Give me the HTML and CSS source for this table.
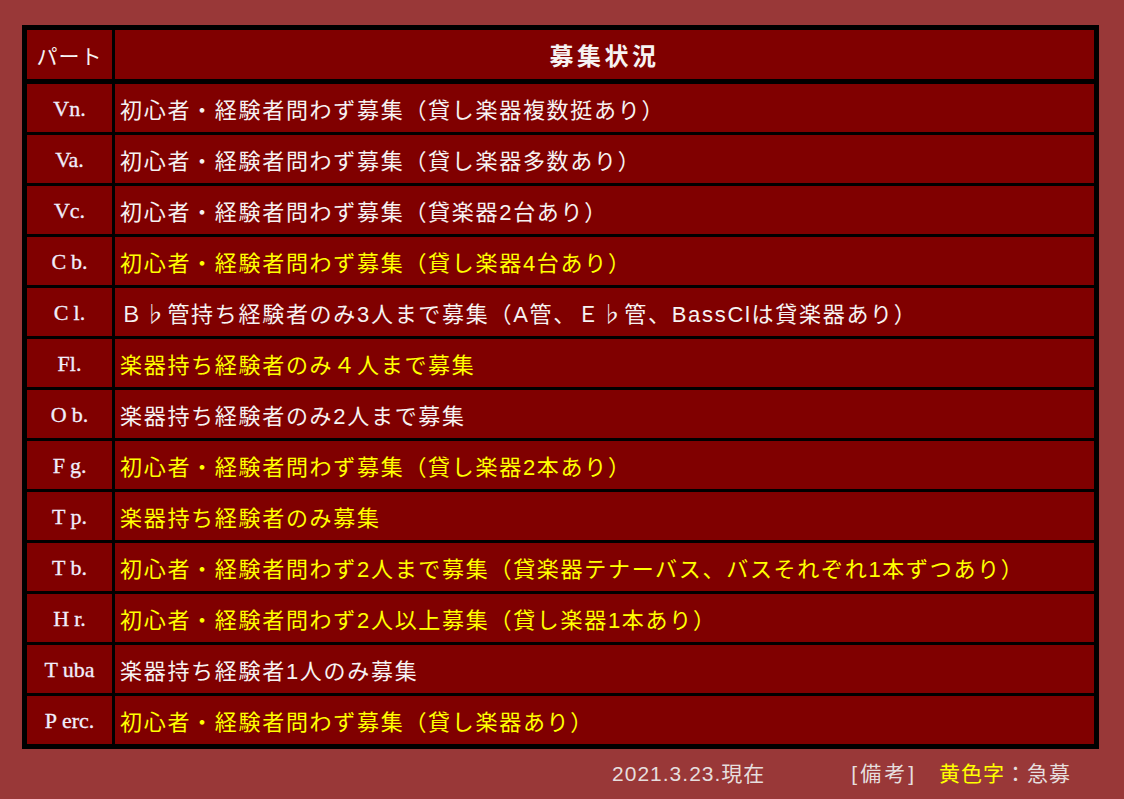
FILE: index.html
```html
<!DOCTYPE html>
<html lang="ja">
<head>
<meta charset="utf-8">
<title>募集状況</title>
<link rel="stylesheet" href="styles.css">
</head>
<body>
<main class="page">
  <div class="board">
    <div class="cell head part-head">パート</div>
    <div class="cell head title-head">募集状況</div>

    <div class="cell part">Vn.</div>
    <div class="cell info">初心者・経験者問わず募集（貸し楽器複数挺あり）</div>

    <div class="cell part">Va.</div>
    <div class="cell info">初心者・経験者問わず募集（貸し楽器多数あり）</div>

    <div class="cell part">Vc.</div>
    <div class="cell info">初心者・経験者問わず募集（貸楽器2台あり）</div>

    <div class="cell part"><span class="cap">C</span>b.</div>
    <div class="cell info urgent">初心者・経験者問わず募集（貸し楽器4台あり）</div>

    <div class="cell part"><span class="cap">C</span>l.</div>
    <div class="cell info">Ｂ♭管持ち経験者のみ3人まで募集（A管、Ｅ♭管、BassClは貸楽器あり）</div>

    <div class="cell part">Fl.</div>
    <div class="cell info urgent">楽器持ち経験者のみ４人まで募集</div>

    <div class="cell part"><span class="cap">O</span>b.</div>
    <div class="cell info">楽器持ち経験者のみ2人まで募集</div>

    <div class="cell part"><span class="cap">F</span>g.</div>
    <div class="cell info urgent">初心者・経験者問わず募集（貸し楽器2本あり）</div>

    <div class="cell part"><span class="cap">T</span>p.</div>
    <div class="cell info urgent">楽器持ち経験者のみ募集</div>

    <div class="cell part"><span class="cap">T</span>b.</div>
    <div class="cell info urgent">初心者・経験者問わず2人まで募集（貸楽器テナーバス、バスそれぞれ1本ずつあり）</div>

    <div class="cell part"><span class="cap">H</span>r.</div>
    <div class="cell info urgent">初心者・経験者問わず2人以上募集（貸し楽器1本あり）</div>

    <div class="cell part"><span class="cap">T</span>uba</div>
    <div class="cell info">楽器持ち経験者1人のみ募集</div>

    <div class="cell part"><span class="cap">P</span>erc.</div>
    <div class="cell info urgent">初心者・経験者問わず募集（貸し楽器あり）</div>
  </div>

  <footer class="notes">
    <span class="date">2021.3.23.現在</span>
    <span class="legend"><span class="legend-label">[備考]</span><span class="legend-key"><span class="yellow">黄色字</span>：急募</span></span>
  </footer>
</main>
</body>
</html>
```

FILE: styles.css
```css
html, body {
  margin: 0;
  padding: 0;
  background: #993838;
}

body {
  font-family: "Liberation Sans", "Noto Sans CJK JP", "Noto Sans", sans-serif;
  color: #f6f2f2;
}

.page {
  padding: 25px 0 0 22px;
  width: 1077px;
}

.board {
  display: grid;
  grid-template-columns: 85px 979px;
  grid-auto-rows: 48px;
  grid-template-rows: 51px;
  column-gap: 3px;
  row-gap: 3px;
  padding: 5px;
  background: #000;
}

.cell {
  background: #800000;
  display: flex;
  align-items: center;
}

.head {
  margin-bottom: 2px;
}

.part-head {
  justify-content: center;
  font-family: "Noto Sans CJK JP", sans-serif;
  font-size: 21px;
  letter-spacing: 1px;
  color: #f6f2f2;
}

.title-head {
  justify-content: center;
  font-family: "Noto Sans CJK JP", sans-serif;
  font-size: 24px;
  font-weight: 700;
  letter-spacing: 3.5px;
  color: #f6f2f2;
}

.part {
  justify-content: center;
  font-family: "Liberation Serif", "DejaVu Serif", serif;
  font-size: 22px;
  color: #f0eefc;
  padding-top: 2px;
  -webkit-text-stroke: 0.3px #f0eefc;
}

.cap {
  margin-right: 5px;
}

.info {
  padding-left: 5px;
  font-size: 22px;
  letter-spacing: 1.7px;
  white-space: nowrap;
  color: #f6f2f2;
}

.urgent {
  color: #ffff00;
}

.notes {
  display: flex;
  justify-content: flex-end;
  align-items: center;
  height: 45px;
  padding-right: 28px;
  font-size: 21px;
  letter-spacing: 1px;
  color: #e6dede;
}

.date {
  margin-right: 86px;
}

.legend-label {
  letter-spacing: 3px;
}

.legend-key {
  margin-left: 22px;
}

.yellow {
  color: #ffff00;
}
```
